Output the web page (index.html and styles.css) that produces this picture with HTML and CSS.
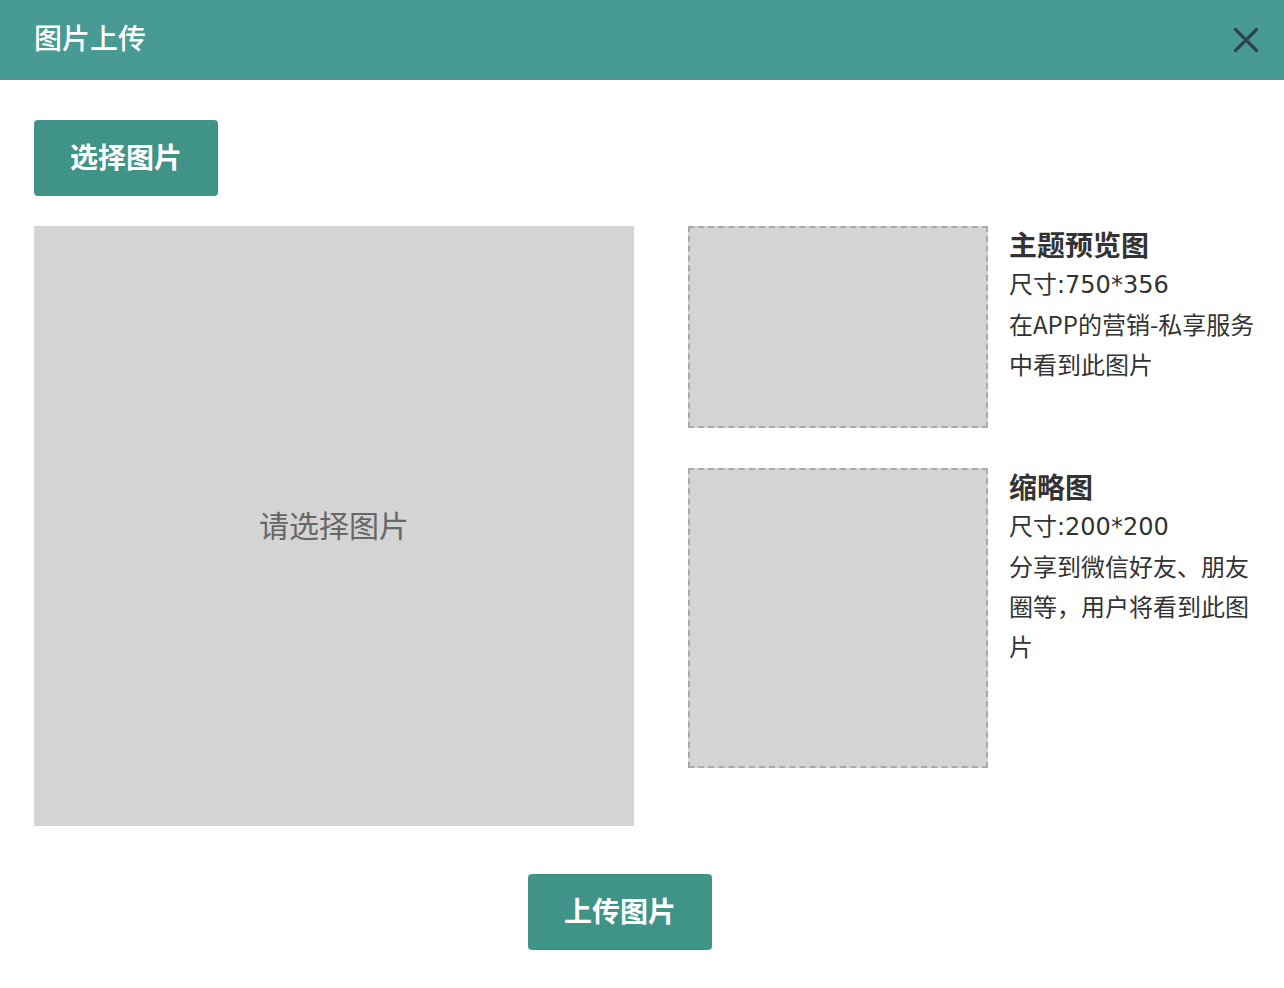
FILE: index.html
```html
<!DOCTYPE html>
<html lang="zh-CN">
<head>
<meta charset="utf-8">
<title>图片上传</title>
<link rel="stylesheet" href="styles.css">
</head>
<body>
<div class="dialog">
  <header class="header">
    <h1 class="title">图片上传</h1>
    <button class="close" aria-label="关闭">
      <svg width="26" height="26" viewBox="0 0 26 26"><path d="M2.5 2.5L23.5 23.5M23.5 2.5L2.5 23.5" stroke="#2c4350" stroke-width="3.2" stroke-linecap="round" fill="none"/></svg>
    </button>
  </header>
  <main class="main">
    <button class="btn btn-select">选择图片</button>
    <div class="content">
      <div class="crop-area">请选择图片</div>
      <div class="previews">
        <div class="preview">
          <div class="preview-box preview-box-wide"></div>
          <div class="preview-info">
            <div class="preview-title">主题预览图</div>
            <div class="preview-text preview-size">尺寸:750*356</div>
            <div class="preview-text">在APP的营销-私享服务中看到此图片</div>
          </div>
        </div>
        <div class="preview">
          <div class="preview-box preview-box-square"></div>
          <div class="preview-info">
            <div class="preview-title">缩略图</div>
            <div class="preview-text preview-size">尺寸:200*200</div>
            <div class="preview-text">分享到微信好友、朋友圈等，用户将看到此图片</div>
          </div>
        </div>
      </div>
    </div>
    <div class="footer">
      <button class="btn btn-upload">上传图片</button>
    </div>
  </main>
</div>
</body>
</html>
```

FILE: styles.css
```css
* { box-sizing: border-box; }
html, body { margin: 0; padding: 0; background: #fff; }
body {
  font-family: "Noto Sans CJK SC", "Noto Sans", sans-serif;
  color: #333;
  width: 1284px;
  overflow: hidden;
}
.header {
  height: 80px;
  background: #479b94;
  display: flex;
  align-items: center;
  justify-content: space-between;
  padding: 0 25px 0 34px;
}
.title {
  margin: 0 0 6px;
  font-size: 28px;
  font-weight: 500;
  color: #fff;
  line-height: 1;
}
.close {
  border: 0;
  background: transparent;
  padding: 0;
  width: 26px;
  height: 26px;
  display: flex;
  cursor: pointer;
}
.main {
  padding: 40px 0 38px 34px;
}
.btn {
  width: 184px;
  height: 76px;
  border: 0;
  border-radius: 4px;
  background: #409387;
  color: #fff;
  font-family: inherit;
  font-size: 28px;
  font-weight: 700;
  cursor: pointer;
  padding: 0 0 4px;
}
.btn-select { display: block; margin-bottom: 30px; }
.content {
  display: flex;
  gap: 54px;
}
.crop-area {
  width: 600px;
  height: 600px;
  background: #d4d4d4;
  display: flex;
  align-items: center;
  justify-content: center;
  padding-bottom: 4px;
  font-size: 30px;
  color: #666;
}
.previews {
  display: flex;
  flex-direction: column;
  gap: 40px;
}
.preview {
  display: flex;
  gap: 21px;
}
.preview-box {
  width: 300px;
  background: #d4d4d4;
  border: 2px dashed #a9a9a9;
  flex: none;
}
.preview-box-wide { height: 202px; }
.preview-box-square { height: 300px; }
.preview-info {
  width: 258px;
  line-height: 40px;
  margin-top: -2px;
}
.preview-title {
  font-size: 28px;
  font-weight: 700;
  color: #333;
}
.preview-text {
  font-size: 24px;
  color: #333;
}
.preview-size {
  font-family: "DejaVu Sans", "Noto Sans CJK SC", sans-serif;
  padding-top: 3px;
  height: 40px;
  line-height: 37px;
}
.footer {
  display: flex;
  justify-content: center;
  margin-top: 48px;
  padding-right: 78px;
}
```
